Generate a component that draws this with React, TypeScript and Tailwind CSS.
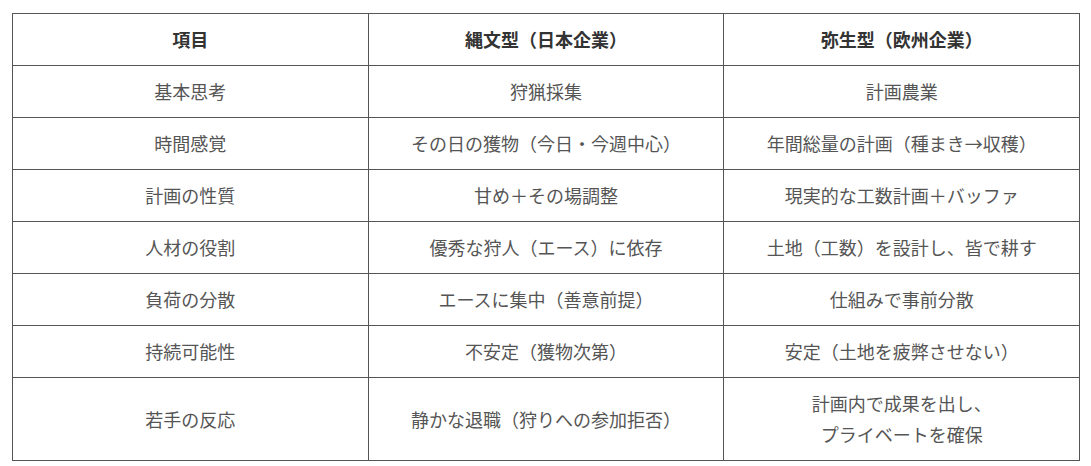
import React from "react";

const rows: [string, string, React.ReactNode][] = [
  ["基本思考", "狩猟採集", "計画農業"],
  ["時間感覚", "その日の獲物（今日・今週中心）", "年間総量の計画（種まき→収穫）"],
  ["計画の性質", "甘め＋その場調整", "現実的な工数計画＋バッファ"],
  ["人材の役割", "優秀な狩人（エース）に依存", "土地（工数）を設計し、皆で耕す"],
  ["負荷の分散", "エースに集中（善意前提）", "仕組みで事前分散"],
  ["持続可能性", "不安定（獲物次第）", "安定（土地を疲弊させない）"],
  [
    "若手の反応",
    "静かな退職（狩りへの参加拒否）",
    <>
      計画内で成果を出し、
      <br />
      プライベートを確保
    </>,
  ],
];

export default function App() {
  return (
    <div
      className="w-[1091px] h-[466px] bg-white pt-[13px] pl-[12px]"
      style={{ fontFamily: '"Noto Sans CJK JP", "Noto Sans", sans-serif' }}
    >
      <table className="w-[1068px] table-fixed border-collapse border border-[#555] text-[18px] leading-[31px] text-[#555]">
        <thead>
          <tr>
            <th className="border border-[#555] py-[10px] font-bold text-[#333]">項目</th>
            <th className="border border-[#555] py-[10px] font-bold text-[#333]">縄文型（日本企業）</th>
            <th className="border border-[#555] py-[10px] font-bold text-[#333]">弥生型（欧州企業）</th>
          </tr>
        </thead>
        <tbody>
          {rows.map((r, i) => (
            <tr key={i}>
              {r.map((c, j) => (
                <td key={j} className="border border-[#555] py-[10px] text-center align-middle">
                  {c}
                </td>
              ))}
            </tr>
          ))}
        </tbody>
      </table>
    </div>
  );
}
